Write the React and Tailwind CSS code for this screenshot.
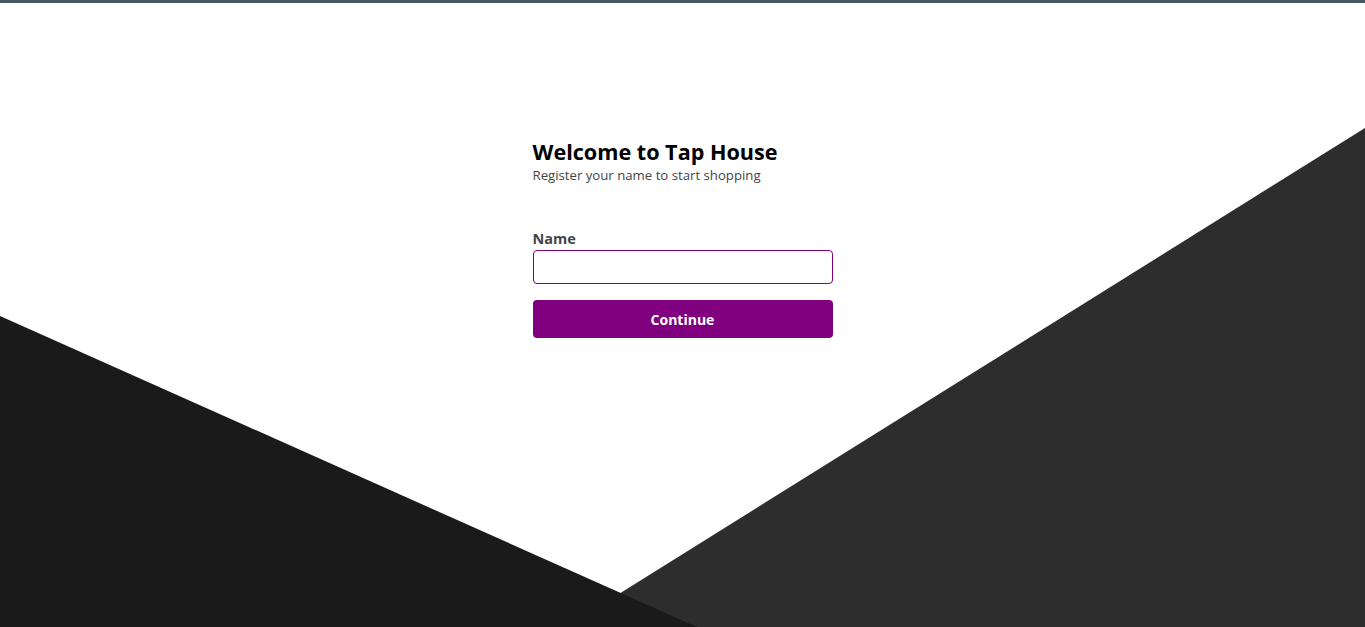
import React, { useState } from 'react';

export default function App() {
  const [name, setName] = useState('');

  return (
    <div className="relative h-[627px] w-full overflow-hidden bg-white font-['Open_Sans',sans-serif]">
      {/* top strip */}
      <div className="h-[3px] w-full bg-[#455a64]" />

      {/* background shapes */}
      <svg className="absolute inset-0 h-full w-full" viewBox="0 0 1365 627" preserveAspectRatio="none">
        <polygon points="1365,128 1365,627 566,627" fill="#2d2d2d" />
        <polygon points="0,316 697,627 0,627" fill="#1a1a1a" />
      </svg>

      <div className="relative flex justify-center pt-[134px]">
        <div className="w-[300px]">
          <h1 className="text-[21.6px] font-bold leading-[30px] text-black">Welcome to Tap House</h1>
          <p className="text-[13.2px] leading-[16px] text-[#444]">Register your name to start shopping</p>

          <label className="mt-[46px] block text-[14.5px] font-bold leading-[20px] text-[#444]">Name</label>
          <input
            type="text"
            value={name}
            onChange={(e) => setName(e.target.value)}
            className="mt-[1px] block h-[34px] w-full rounded-[4px] border border-[#800080] px-3 text-[14px] outline-none"
          />
          <button className="mt-[16px] h-[38px] w-full rounded-[4px] bg-[#800080] text-[14px] font-bold text-white">
            Continue
          </button>
        </div>
      </div>
    </div>
  );
}
